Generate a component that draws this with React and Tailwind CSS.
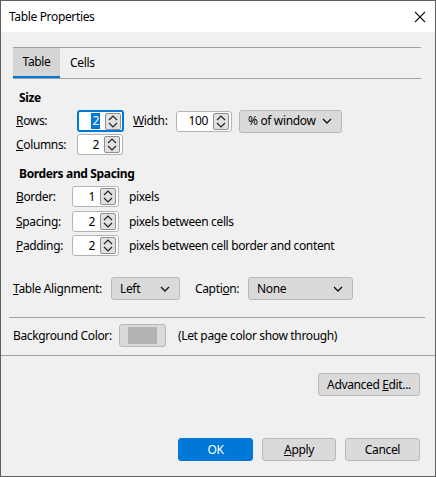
import React from "react";

function Spin() {
  return (
    <div className="w-[16px] h-[17px] border border-[#8f8f8f] bg-[#e1e1e1] rounded-[2px] flex flex-col items-center justify-center gap-[1px]">
      <svg width="10" height="6" viewBox="0 0 10 6">
        <path d="M1 5 L5 1 L9 5" fill="none" stroke="#222" strokeWidth="1.2" />
      </svg>
      <svg width="10" height="6" viewBox="0 0 10 6">
        <path d="M1 1 L5 5 L9 1" fill="none" stroke="#222" strokeWidth="1.2" />
      </svg>
    </div>
  );
}

function NumInput({ value, w = "w-[47px]", focused = false }) {
  return (
    <div
      className={
        "bg-white flex items-center justify-end rounded-[3px] " +
        w +
        (focused
          ? " h-[22px] border-2 border-[#0078d7] pr-[1px]"
          : " h-[21px] border border-[#b4b4b4] pr-[2px]")
      }
    >
      <span
        className={
          "leading-[16px] mr-[5px] " +
          (focused ? "bg-[#0078d7] text-white px-[1px]" : "")
        }
      >
        {value}
      </span>
      <Spin />
    </div>
  );
}

function Chevron() {
  return (
    <svg width="10" height="6" viewBox="0 0 10 6">
      <path d="M1 1 L5 5 L9 1" fill="none" stroke="#111" strokeWidth="1.4" />
    </svg>
  );
}

function Dropdown({ label, w }) {
  return (
    <div
      className={
        "h-[23px] bg-[#dadada] border border-[#b8b8b8] rounded-[3px] flex items-center justify-between pl-[8px] pr-[9px] " +
        w
      }
    >
      <span>{label}</span>
      <Chevron />
    </div>
  );
}

function Btn({ children, w, primary = false }) {
  return (
    <div
      className={
        "h-[23px] rounded-[3px] flex items-center justify-center " +
        w +
        (primary
          ? " bg-[#0078d7] border border-[#0078d7] text-white"
          : " bg-[#dadada] border border-[#b8b8b8]")
      }
    >
      {children}
    </div>
  );
}

export default function App() {
  return (
    <div
      className="w-[436px] h-[477px] border border-[#5f5f5f] bg-[#f0f0f0] flex flex-col text-[12px] tracking-[-0.35px] text-black"
      style={{ fontFamily: '"Noto Sans", "Open Sans", sans-serif' }}
    >
      {/* Title bar */}
      <div className="h-[31px] bg-white flex items-center justify-between pl-[8px] pr-[9px]">
        <span className="text-[12px]">Table Properties</span>
        <svg width="12" height="12" viewBox="0 0 12 12">
          <path d="M1 1 L11 11 M11 1 L1 11" stroke="#111" strokeWidth="1.1" />
        </svg>
      </div>

      <div className="flex flex-col pl-[12px] pr-[14px]">
        {/* Tabs */}
        <div className="mt-[15px] border-t border-b border-[#a0a0a0] h-[32px] flex">
          <div className="w-[47px] h-[30px] bg-[#d5d5d5] border-b-2 border-[#0078d7] flex items-center justify-center">
            Table
          </div>
          <div className="px-[10px] flex items-center">Cells</div>
        </div>

        {/* Size */}
        <div className="mt-[11px] ml-[6px] font-bold leading-[16px]">Size</div>
        <div className="mt-[4px] ml-[3px] flex items-center h-[22px]">
          <span className="w-[61px]">
            <u>R</u>ows:
          </span>
          <NumInput value="2" focused />
          <span className="ml-[9px] w-[43px]">
            <u>W</u>idth:
          </span>
          <NumInput value="100" w="w-[56px]" />
          <div className="ml-[7px]">
            <Dropdown label="% of window" w="w-[103px]" />
          </div>
        </div>
        <div className="mt-[2px] ml-[3px] flex items-center h-[21px]">
          <span className="w-[61px]">
            <u>C</u>olumns:
          </span>
          <NumInput value="2" w="w-[46px]" />
        </div>

        {/* Borders and Spacing */}
        <div className="mt-[11px] ml-[6px] font-bold leading-[16px]">Borders and Spacing</div>
        <div className="mt-[4px] ml-[3px] flex items-center h-[21px]">
          <span className="w-[56px]">
            <u>B</u>order:
          </span>
          <NumInput value="1" />
          <span className="ml-[10px]">pixels</span>
        </div>
        <div className="mt-[4px] ml-[3px] flex items-center h-[21px]">
          <span className="w-[56px]">
            <u>S</u>pacing:
          </span>
          <NumInput value="2" />
          <span className="ml-[10px]">pixels between cells</span>
        </div>
        <div className="mt-[3px] ml-[3px] flex items-center h-[21px]">
          <span className="w-[56px]">
            <u>P</u>adding:
          </span>
          <NumInput value="2" />
          <span className="ml-[10px]">pixels between cell border and content</span>
        </div>

        {/* Alignment */}
        <div className="mt-[21px] flex items-center h-[23px]">
          <span className="w-[98px]">
            <u>T</u>able Alignment:
          </span>
          <Dropdown label="Left" w="w-[69px]" />
          <span className="ml-[15px] w-[53px]">
            Capti<u>o</u>n:
          </span>
          <Dropdown label="None" w="w-[105px]" />
        </div>

        <div className="mt-[17px] -ml-[4px] -mr-[4px] h-px bg-[#a0a0a0]" />

        {/* Background color */}
        <div className="mt-[6px] flex items-center h-[23px]">
          <span className="w-[106px]">Background Color:</span>
          <div className="w-[47px] h-[23px] bg-[#dadada] border border-[#b8b8b8] rounded-[3px] flex items-center justify-center">
            <div className="w-[29px] h-[17px] bg-[#b4b4b4]" />
          </div>
          <span className="ml-[12px]">(Let page color show through)</span>
        </div>

        <div className="mt-[8px] -ml-[12px] -mr-[14px] h-px bg-[#a0a0a0]" />

        {/* Advanced edit */}
        <div className="mt-[17px] flex justify-end pr-[1px]">
          <Btn w="w-[102px]">
            <span>
              Advanced <u>E</u>dit...
            </span>
          </Btn>
        </div>

        {/* Bottom buttons */}
        <div className="mt-[42px] flex justify-end gap-[9px] pr-[1px]">
          <Btn w="w-[75px]" primary>
            OK
          </Btn>
          <Btn w="w-[74px]">
            <span>
              <u>A</u>pply
            </span>
          </Btn>
          <Btn w="w-[75px]">Cancel</Btn>
        </div>
      </div>
    </div>
  );
}
